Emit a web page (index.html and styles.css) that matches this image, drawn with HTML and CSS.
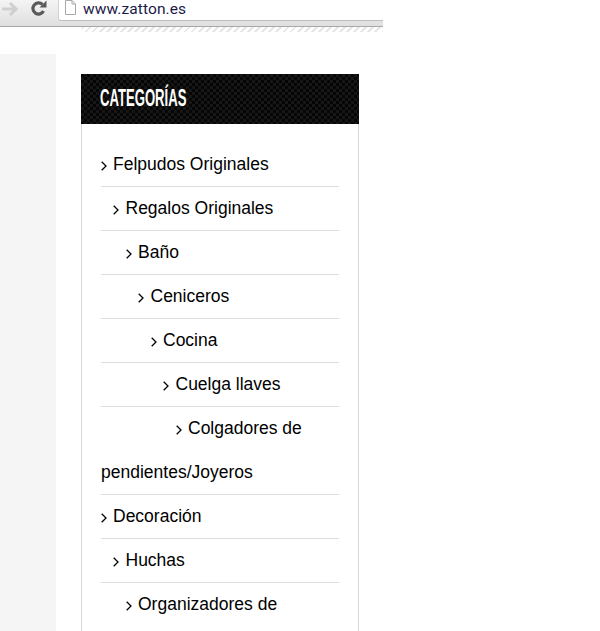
FILE: index.html
```html
<!DOCTYPE html>
<html>
<head>
  <title>Categorías</title>
  <link rel="stylesheet" href="styles.css">
</head>
<body>
  <div class="toolbar">
    <div class="nav-buttons">
      <svg width="18" height="16" viewBox="0 0 18 16"><path d="M1 8h14M9 2l6 6-6 6" fill="none" stroke="#cfcfcf" stroke-width="3"/></svg>
      <svg width="17" height="17" viewBox="0 0 17 17"><path d="M13.500 11A5.600 5.600 0 1 1 12.500 4.500" fill="none" stroke="#5a5a5a" stroke-width="3.200"/><path d="M9.500 7.500h7V.5z" fill="#5a5a5a"/></svg>
    </div>
    <div class="address">
      <svg width="11" height="15" viewBox="0 0 11 15"><path d="M.5.5h6.500l3.500 3.500v10.500h-10zM7 .5v3.500h3.500" fill="#fff" stroke="#a8a8a8"/></svg>
      <span class="url">www.zatton.es</span>
    </div>
  </div>
  <div class="hatch"></div>

  <div class="page">
    <div class="side-strip"></div>
    <div class="widget">
      <h3 class="widget-title"><span>CATEGORÍAS</span></h3>
      <ul class="cat-list">
        <li class="level-0"><svg class="chevron" viewBox="0 0 6 10"><path d="M.7.7 5 5 .7 9.300" fill="none" stroke="#000" stroke-width="1.300"/></svg>Felpudos Originales</li>
        <li class="level-1"><svg class="chevron" viewBox="0 0 6 10"><path d="M.7.7 5 5 .7 9.300" fill="none" stroke="#000" stroke-width="1.300"/></svg>Regalos Originales</li>
        <li class="level-2"><svg class="chevron" viewBox="0 0 6 10"><path d="M.7.7 5 5 .7 9.300" fill="none" stroke="#000" stroke-width="1.300"/></svg>Baño</li>
        <li class="level-3"><svg class="chevron" viewBox="0 0 6 10"><path d="M.7.7 5 5 .7 9.300" fill="none" stroke="#000" stroke-width="1.300"/></svg>Ceniceros</li>
        <li class="level-4"><svg class="chevron" viewBox="0 0 6 10"><path d="M.7.7 5 5 .7 9.300" fill="none" stroke="#000" stroke-width="1.300"/></svg>Cocina</li>
        <li class="level-5"><svg class="chevron" viewBox="0 0 6 10"><path d="M.7.7 5 5 .7 9.300" fill="none" stroke="#000" stroke-width="1.300"/></svg>Cuelga llaves</li>
        <li class="level-6"><svg class="chevron" viewBox="0 0 6 10"><path d="M.7.7 5 5 .7 9.300" fill="none" stroke="#000" stroke-width="1.300"/></svg>Colgadores de pendientes/Joyeros</li>
        <li class="level-0"><svg class="chevron" viewBox="0 0 6 10"><path d="M.7.7 5 5 .7 9.300" fill="none" stroke="#000" stroke-width="1.300"/></svg>Decoración</li>
        <li class="level-1"><svg class="chevron" viewBox="0 0 6 10"><path d="M.7.7 5 5 .7 9.300" fill="none" stroke="#000" stroke-width="1.300"/></svg>Huchas</li>
        <li class="level-2"><svg class="chevron" viewBox="0 0 6 10"><path d="M.7.7 5 5 .7 9.300" fill="none" stroke="#000" stroke-width="1.300"/></svg>Organizadores de</li>
      </ul>
    </div>
  </div>
</body>
</html>
```

FILE: styles.css
```css
html, body {
  height: 100%;
}

body {
  margin: 0;
  background-color: #fff;
  font-family: "Liberation Sans", Arial, sans-serif;
  overflow: hidden;
}

/* Browser chrome */
.toolbar {
  display: flex;
  align-items: flex-start;
  width: 383px;
  height: 26px;
  background: linear-gradient(#f4f4f4, #dfdfdf);
  border-bottom: 1px solid #a8a8a8;
}

.nav-buttons {
  display: flex;
  align-items: center;
  gap: 11px;
  box-sizing: border-box;
  width: 58px;
  height: 17px;
  padding-left: 1px;
}

.address {
  flex: 1;
  display: flex;
  align-items: flex-start;
  gap: 7px;
  height: 20px;
  padding-left: 6px;
  background-color: #fff;
  border-left: 1px solid #d2d2d2;
  border-bottom: 1px solid #bdbdbd;
  border-bottom-left-radius: 3px;
}

.url {
  font-family: Roboto, sans-serif;
  font-size: 15.500px;
  line-height: 19px;
  letter-spacing: 0.100px;
  color: #1b1b4a;
}

.hatch {
  width: 301px;
  height: 5px;
  margin-left: 82px;
  background: repeating-linear-gradient(135deg, #e6e6e6 0, #e6e6e6 2px, #fff 2px, #fff 5px);
}

/* Page */
.page {
  display: flex;
  height: 600px;
  margin-top: 22px;
}

.side-strip {
  width: 56px;
  background-color: #f5f5f5;
}

.widget {
  width: 278px;
  margin: 20px 0 0 25px;
  box-sizing: border-box;
  border-left: 1px solid #d8d8d8;
  border-right: 1px solid #d8d8d8;
}

.widget-title {
  height: 50px;
  margin: 0 -1px;
  padding-left: 19px;
  background-color: #0a0a0a;
  background-image: repeating-conic-gradient(#161616 0 25%, #060606 0 50%);
  background-size: 6px 6px;
  color: #fff;
  font-size: 23px;
  font-weight: bold;
  line-height: 48px;
}

.widget-title span {
  display: inline-block;
  transform: scaleX(0.57);
  transform-origin: left center;
}

.cat-list {
  margin: 0;
  padding: 18px 19px 0;
  list-style: none;
}

.cat-list li {
  margin-bottom: -1px;
  border-bottom: 1px solid #dcdcdc;
  color: #000;
  font-size: 17.500px;
  line-height: 44px;
}

.cat-list li:last-child {
  border-bottom: none;
}

.chevron {
  width: 6px;
  height: 10px;
  margin-right: 6.500px;
  margin-left: -0.500px;
  vertical-align: -1px;
}

.level-0 { text-indent: 0; }
.level-1 { text-indent: 12.500px; }
.level-2 { text-indent: 25px; }
.level-3 { text-indent: 37.500px; }
.level-4 { text-indent: 50px; }
.level-5 { text-indent: 62.500px; }
.level-6 { text-indent: 75px; }
```
